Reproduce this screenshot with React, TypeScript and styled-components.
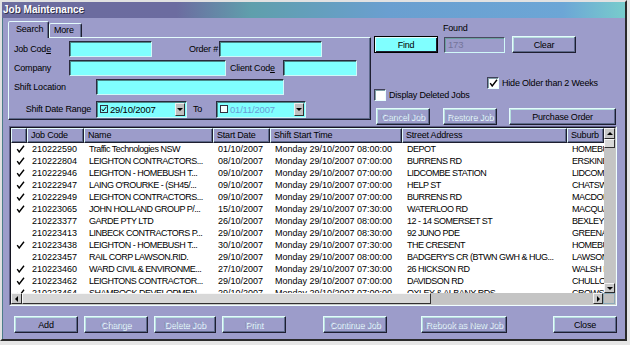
import React from 'react'
import styled, { createGlobalStyle } from 'styled-components'

const LAV = '#9c9cca'
const CYAN = '#80ffff'
const HI = '#e4fcfc'
const SH = '#1e1e30'
const MID = '#5e6a8c'

const GlobalStyle = createGlobalStyle`
  html, body { margin:0; padding:0; background:#e6e6e6; }
  body { font-family:"Liberation Sans", Arial, sans-serif; font-size:9px; letter-spacing:-0.2px; color:#000; }
  * { box-sizing:border-box; }
`

type Job = { c: boolean; code: string; name: string; start: string; shift: string; addr: string; sub: string }

const jobs: Job[] = [
  { c: true, code: '210222590', name: 'Traffic Technologies NSW', start: '01/10/2007', shift: 'Monday 29/10/2007 08:00:00', addr: 'DEPOT', sub: 'HOMEBUSH' },
  { c: true, code: '210222804', name: 'LEIGHTON CONTRACTORS...', start: '08/10/2007', shift: 'Monday 29/10/2007 07:00:00', addr: 'BURRENS RD', sub: 'ERSKINE PARK' },
  { c: true, code: '210222946', name: 'LEIGHTON - HOMEBUSH T...', start: '09/10/2007', shift: 'Monday 29/10/2007 07:00:00', addr: 'LIDCOMBE STATION', sub: 'LIDCOMBE' },
  { c: true, code: '210222947', name: "LAING O'ROURKE - (SH45/...", start: '09/10/2007', shift: 'Monday 29/10/2007 07:00:00', addr: 'HELP ST', sub: 'CHATSWOOD' },
  { c: true, code: '210222949', name: 'LEIGHTON CONTRACTORS...', start: '09/10/2007', shift: 'Monday 29/10/2007 07:00:00', addr: 'BURRENS RD', sub: 'MACDONALDTOWN' },
  { c: true, code: '210223065', name: 'JOHN HOLLAND GROUP P/...', start: '15/10/2007', shift: 'Monday 29/10/2007 07:30:00', addr: 'WATERLOO RD', sub: 'MACQUARIE PARK' },
  { c: false, code: '210223377', name: 'GARDE PTY LTD', start: '26/10/2007', shift: 'Monday 29/10/2007 08:00:00', addr: '12 - 14 SOMERSET ST', sub: 'BEXLEY' },
  { c: false, code: '210223413', name: 'LINBECK CONTRACTORS P...', start: '29/10/2007', shift: 'Monday 29/10/2007 08:30:00', addr: '92 JUNO PDE', sub: 'GREENACRE' },
  { c: true, code: '210223438', name: 'LEIGHTON - HOMEBUSH T...', start: '30/10/2007', shift: 'Monday 29/10/2007 07:30:00', addr: 'THE CRESENT', sub: 'HOMEBUSH' },
  { c: false, code: '210223457', name: 'RAIL CORP LAWSON.RID.', start: '29/10/2007', shift: 'Monday 29/10/2007 08:00:00', addr: "BADGERY'S CR (BTWN GWH & HUG...", sub: 'LAWSON' },
  { c: true, code: '210223460', name: 'WARD CIVIL & ENVIRONME...', start: '27/10/2007', shift: 'Monday 29/10/2007 07:30:00', addr: '26  HICKSON RD', sub: 'WALSH BAY' },
  { c: true, code: '210223462', name: 'LEIGHTONS CONTRACTOR...', start: '29/10/2007', shift: 'Monday 29/10/2007 07:00:00', addr: 'DAVIDSON RD', sub: 'CHULLORA' },
  { c: true, code: '210223464', name: 'SHAMROCK DEVELOPMEN...', start: '29/10/2007', shift: 'Monday 29/10/2007 07:00:00', addr: 'OXLEY & ALBANY RDS', sub: 'CROWS NEST' },
]

const cols = [16, 57, 129, 57, 132, 165, 37]
const headers = ['', 'Job Code', 'Name', 'Start Date', 'Shift Start Time', 'Street Address', 'Suburb']

const Tick = () => (
  <svg width="9" height="8" viewBox="0 0 9 8">
    <path d="M1.2 4.2 L3.2 7 L8 0.8" fill="none" stroke="#000" strokeWidth="1.4" />
  </svg>
)

export default function App() {
  return (
    <>
      <GlobalStyle />
      <Window>
        <TitleBar>Job Maintenance</TitleBar>
        <Body>
          <Top>
            <SearchArea>
              <TabStrip>
                <Tab $active>Search</Tab>
                <Tab>More</Tab>
              </TabStrip>
              <Panel>
                <FieldRow>
                  <Label $w={55}>Job Cod<u>e</u></Label>
                  <TextBox $w={83} />
                  <Label $w={67} $right>Order #</Label>
                  <TextBox $w={103} />
                </FieldRow>
                <FieldRow>
                  <Label $w={55}>Company</Label>
                  <TextBox $w={157} />
                  <Label $w={57} $pl={4}>Client Cod<u>e</u></Label>
                  <TextBox $w={74} />
                </FieldRow>
                <FieldRow>
                  <Label $w={82}>Shift Location</Label>
                  <TextBox $w={188} />
                </FieldRow>
                <FieldRow $mt={3}>
                  <Label $w={82} $right $pr={5}>Shift Date Range</Label>
                  <DateBox $w={91}>
                    <SmallCheck><Tick /></SmallCheck>
                    <DateText>29/10/2007</DateText>
                    <DropBtn><Arrow $dir="down" /></DropBtn>
                  </DateBox>
                  <Label $w={29} $pl={6}>To</Label>
                  <DateBox $w={90}>
                    <SmallCheck $white />
                    <DateText $muted>01/11/2007</DateText>
                    <DropBtn><Arrow $dir="down" /></DropBtn>
                  </DateBox>
                </FieldRow>
              </Panel>
            </SearchArea>
            <RightPanel>
              <FoundLabel>Found</FoundLabel>
              <BtnRow>
                <Btn $w={64} $default>Find</Btn>
                <FoundBox $ml={6}>173</FoundBox>
                <Btn $w={64} $ml={7}>Clear</Btn>
              </BtnRow>
              <CheckRow $ml={113} $mt={24}>
                <CheckBox><Tick /></CheckBox>
                Hide Older than 2 Weeks
              </CheckRow>
              <CheckRow>
                <CheckBox />
                Display Deleted Jobs
              </CheckRow>
              <BtnRow $mt={7}>
                <Btn $w={54} $ml={2} disabled>Cancel Job</Btn>
                <Btn $w={54} $ml={13} disabled>Restore Job</Btn>
                <Btn $w={107} $ml={12}>Purchase Order</Btn>
              </BtnRow>
            </RightPanel>
          </Top>

          <GridFrame>
            <GridInner>
              <GridMain>
                <Table>
                  <HeadRow>
                    {headers.map((h, i) => (
                      <HeadCell key={i}>{h}</HeadCell>
                    ))}
                  </HeadRow>
                  {jobs.map((j) => (
                    <DataRow key={j.code}>
                      <TickCell>{j.c && <Tick />}</TickCell>
                      <Cell>{j.code}</Cell>
                      <Cell $tight>{j.name}</Cell>
                      <Cell>{j.start}</Cell>
                      <Cell>{j.shift}</Cell>
                      <Cell $tight>{j.addr}</Cell>
                      <Cell $tight>{j.sub}</Cell>
                    </DataRow>
                  ))}
                </Table>
                <VScroll>
                  <ScrollBtn $h={11}><Arrow $dir="up" /></ScrollBtn>
                  <ScrollThumb style={{ height: 9 }} />
                  <Track />
                  <ScrollBtn $h={10}><Arrow $dir="down" /></ScrollBtn>
                </VScroll>
              </GridMain>
              <HScroll>
                <ScrollBtn $w={11}><Arrow $dir="left" /></ScrollBtn>
                <ScrollThumb style={{ width: 409 }} />
                <Track />
                <ScrollBtn $w={10}><Arrow $dir="right" /></ScrollBtn>
                <Corner />
              </HScroll>
            </GridInner>
          </GridFrame>

          <BottomRow>
            <Btn $w={64} $ml={12}>Add</Btn>
            <Btn $w={64} $ml={6} disabled>Change</Btn>
            <Btn $w={62} $ml={6} disabled>Delete Job</Btn>
            <Btn $w={64} $ml={6} disabled>Print</Btn>
            <Btn $w={64} $ml={37} disabled>Continue Job</Btn>
            <Btn $w={86} $ml={34} disabled>Rebook as New Job</Btn>
            <Btn $w={64} $ml={46}>Close</Btn>
          </BottomRow>
        </Body>
      </Window>
    </>
  )
}

const Window = styled.div`
  width:627px;
  height:341px;
  display:flex;
  flex-direction:column;
  background:${LAV};
  border:2px solid;
  border-color:#e2e2e2 #2a2a2a #2a2a2a #e2e2e2;
`

const TitleBar = styled.div`
  height:16px;
  padding-left:1px;
  line-height:16px;
  font-size:10px;
  letter-spacing:0;
  font-weight:bold;
  color:#fff;
  text-shadow:1px 1px 0 #30304a;
  background:linear-gradient(to right, #6c6c9e 0%, #6c6ca0 28%, #5f9fac 40%, #6a9fd0 62%, #6ca6d6 90%, #78cccc 100%);
`

const Body = styled.div`
  flex:1;
  display:flex;
  flex-direction:column;
  padding-top:3px;
  box-shadow:inset 1px 0 0 #4c7c88;
`

const Top = styled.div`
  display:flex;
  align-items:flex-start;
  margin-left:6px;
`

const SearchArea = styled.div`
  width:363px;
  display:flex;
  flex-direction:column;
`

const TabStrip = styled.div`
  display:flex;
  align-items:flex-end;
  height:16px;
`

const Tab = styled.div<{ $active?: boolean }>`
  height:${p => (p.$active ? 17 : 14)}px;
  width:${p => (p.$active ? 41 : 33)}px;
  margin-bottom:${p => (p.$active ? -1 : 0)}px;
  position:relative;
  z-index:${p => (p.$active ? 1 : 0)};
  background:${LAV};
  border:1px solid;
  border-bottom:none;
  border-color:${HI} ${SH} transparent ${HI};
  border-radius:2px 2px 0 0;
  padding-left:${p => (p.$active ? 7 : 4)}px;
  line-height:${p => (p.$active ? 15 : 13)}px;
  box-shadow:inset -1px 0 0 ${MID};
`

const Panel = styled.div`
  height:83px;
  border:1px solid;
  border-color:${HI} ${SH} ${SH} ${HI};
  box-shadow:inset -1px -1px 0 ${MID};
  padding:3px 0 0 5px;
  display:flex;
  flex-direction:column;
  gap:3px;
`

const FieldRow = styled.div<{ $mt?: number }>`
  display:flex;
  align-items:center;
  height:16px;
  margin-top:${p => p.$mt ?? 0}px;
`

const Label = styled.span<{ $w: number; $right?: boolean; $pl?: number; $pr?: number }>`
  width:${p => p.$w}px;
  flex:none;
  text-align:${p => (p.$right ? 'right' : 'left')};
  padding-left:${p => p.$pl ?? 0}px;
  padding-right:${p => p.$pr ?? 1}px;
  white-space:nowrap;
`

const TextBox = styled.input<{ $w: number }>`
  width:${p => p.$w}px;
  height:16px;
  flex:none;
  margin:0;
  padding:0 2px;
  background:${CYAN};
  border:1px solid;
  border-color:#2a2a3c #d0f8f8 #d0f8f8 #2a2a3c;
  box-shadow:inset 1px 1px 0 #4a8a8a;
  outline:none;
  font:inherit;
`

const DateBox = styled.div<{ $w: number }>`
  width:${p => p.$w}px;
  height:17px;
  flex:none;
  display:flex;
  align-items:center;
  background:${CYAN};
  border:1px solid;
  border-color:#2a2a3c #d0f8f8 #d0f8f8 #2a2a3c;
  box-shadow:inset 1px 1px 0 #4a8a8a;
  padding:1px 1px 1px 3px;
`

const SmallCheck = styled.span<{ $white?: boolean }>`
  width:8px;
  height:8px;
  flex:none;
  display:flex;
  align-items:center;
  justify-content:center;
  background:${p => (p.$white ? '#f4ffff' : CYAN)};
  border:1px solid #303040;
  svg { width:6px; height:6px; }
`

const DateText = styled.span<{ $muted?: boolean }>`
  flex:1;
  padding-left:2px;
  font-size:9.5px;
  color:${p => (p.$muted ? '#6a9ed6' : '#000')};
`

const DropBtn = styled.span`
  width:10px;
  height:13px;
  flex:none;
  display:flex;
  align-items:center;
  justify-content:center;
  background:#c0c0c0;
  border:1px solid;
  border-color:#f0f0f0 #303030 #303030 #f0f0f0;
`

const Arrow = styled.span<{ $dir: 'up' | 'down' | 'left' | 'right' }>`
  width:0;
  height:0;
  border:3px solid transparent;
  ${p =>
    p.$dir === 'down'
      ? 'border-top:3px solid #000; border-bottom:0; margin-top:1px;'
      : p.$dir === 'up'
      ? 'border-bottom:3px solid #000; border-top:0;'
      : p.$dir === 'left'
      ? 'border-right:3px solid #000; border-left:0;'
      : 'border-left:3px solid #000; border-right:0;'}
`

const RightPanel = styled.div`
  width:243px;
  margin-left:3px;
  display:flex;
  flex-direction:column;
`

const FoundLabel = styled.div`
  height:15px;
  line-height:15px;
  padding-left:69px;
`

const BtnRow = styled.div<{ $mt?: number }>`
  display:flex;
  align-items:center;
  margin-top:${p => p.$mt ?? 0}px;
`

const Btn = styled.button<{ $w: number; $ml?: number; $default?: boolean }>`
  width:${p => p.$w}px;
  height:17px;
  flex:none;
  margin:0 0 0 ${p => p.$ml ?? 0}px;
  padding:0;
  white-space:nowrap;
  font-family:inherit;
  font-size:9px;
  letter-spacing:-0.2px;
  color:#000;
  background:${p => (p.$default ? CYAN : LAV)};
  border:1px solid;
  border-color:${p => (p.$default ? '#000' : `${HI} ${SH} ${SH} ${HI}`)};
  box-shadow:${p =>
    p.$default
      ? `inset 1px 1px 0 ${HI}, inset -1px -1px 0 ${SH}`
      : `inset -1px -1px 0 ${MID}, inset 1px 1px 0 #b6dede`};
  &:disabled {
    color:#b0b0d8;
    text-shadow:1px 1px 0 #eaffff, -0.5px -0.5px 0 #6a86a0;
  }
`

const FoundBox = styled.div<{ $ml?: number }>`
  width:61px;
  height:16px;
  margin-left:${p => p.$ml ?? 0}px;
  padding-left:3px;
  line-height:14px;
  font-size:9.5px;
  color:#74749a;
  border:1px solid;
  border-color:#4a4a60 #d0f8f8 #d0f8f8 #4a4a60;
  box-shadow:inset 1px 1px 0 #6aa0a0;
`

const CheckRow = styled.div<{ $ml?: number; $mt?: number }>`
  display:flex;
  align-items:center;
  gap:3px;
  height:12px;
  margin-left:${p => p.$ml ?? 0}px;
  margin-top:${p => p.$mt ?? 0}px;
  white-space:nowrap;
`

const CheckBox = styled.span`
  width:12px;
  height:12px;
  flex:none;
  display:flex;
  align-items:center;
  justify-content:center;
  background:#fff;
  border:1px solid;
  border-color:#404058 #e8ffff #e8ffff #404058;
  box-shadow:inset 1px 1px 0 #80a0a8;
`

const GridFrame = styled.div`
  width:608px;
  height:180px;
  margin:1px 0 0 7px;
  border:1px solid;
  border-color:#606088 #f0ffff #f0ffff #606088;
`

const GridInner = styled.div`
  height:100%;
  display:flex;
  flex-direction:column;
  border:1px solid;
  border-color:#141420 #c8c8c8 #c8c8c8 #141420;
`

const GridMain = styled.div`
  display:flex;
  height:165px;
`

const Table = styled.div`
  width:593px;
  overflow:hidden;
  background:#fff;
`

const rowCols = cols.map(c => `${c}px`).join(' ')

const HeadRow = styled.div`
  display:grid;
  grid-template-columns:${rowCols};
  height:15px;
  background:${LAV};
`

const HeadCell = styled.div`
  border:1px solid;
  border-color:${HI} ${SH} ${SH} ${HI};
  box-shadow:inset -1px -1px 0 ${MID};
  padding-left:3px;
  line-height:13px;
  white-space:nowrap;
  overflow:hidden;
`

const DataRow = styled.div`
  display:grid;
  grid-template-columns:${rowCols};
  height:12px;
  line-height:12px;
`

const Cell = styled.div<{ $tight?: boolean }>`
  padding-left:5px;
  white-space:nowrap;
  overflow:hidden;
  letter-spacing:${p => (p.$tight ? '-0.5px' : '0')};
`

const TickCell = styled.div`
  display:flex;
  align-items:center;
  justify-content:center;
  padding-left:2px;
`

const VScroll = styled.div`
  width:11px;
  display:flex;
  flex-direction:column;
  background:#c4c4c4;
`

const ScrollBtn = styled.div<{ $w?: number; $h?: number }>`
  width:${p => (p.$w ? `${p.$w}px` : '100%')};
  height:${p => (p.$h ? `${p.$h}px` : '100%')};
  flex:none;
  display:flex;
  align-items:center;
  justify-content:center;
  background:#c8c8c8;
  border:1px solid;
  border-color:#f4f4f4 #2a2a2a #2a2a2a #f4f4f4;
`

const ScrollThumb = styled.div`
  flex:none;
  background:#d8d8d8;
  border:1px solid;
  border-color:#f8f8f8 #303030 #303030 #f8f8f8;
`

const Track = styled.div`
  flex:1;
  background:#c4c4c4;
`

const HScroll = styled.div`
  display:flex;
  height:11px;
`

const Corner = styled.div`
  width:12px;
  flex:none;
  background:#c0c0c0;
  border:1px solid #8aa8b8;
`

const BottomRow = styled.div`
  display:flex;
  align-items:center;
  margin-top:10px;
`
